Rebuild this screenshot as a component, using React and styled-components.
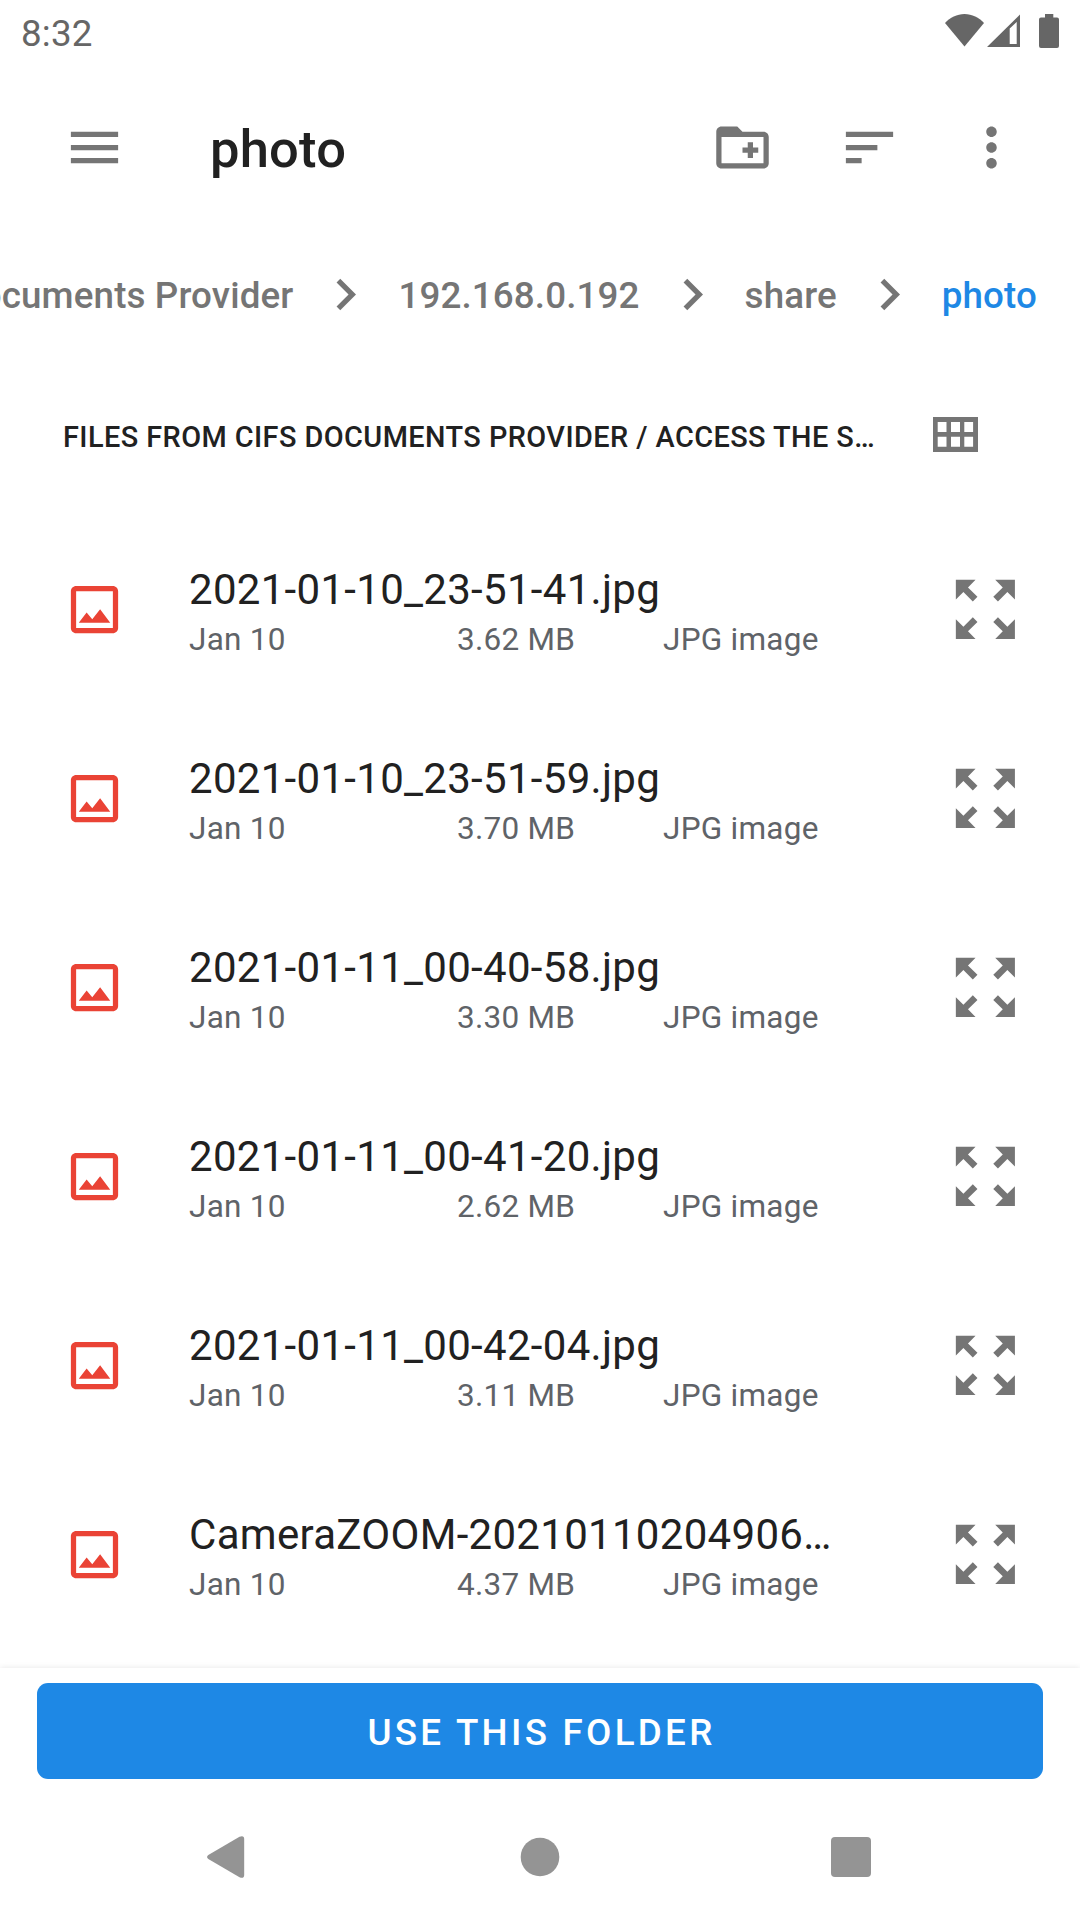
import React from "react";
import styled, { createGlobalStyle } from "styled-components";

const GlobalStyle = createGlobalStyle`
  *, *::before, *::after { box-sizing: border-box; }
  body { margin: 0; background: #fff; }
`;

const Screen = styled.div`
  width: 1080px;
  height: 1920px;
  display: flex;
  flex-direction: column;
  overflow: hidden;
  background: #fff;
  color: #212121;
  font-family: Roboto, "Noto Sans", sans-serif;
`;

const Icon = styled.svg`
  display: block;
  flex: none;
  width: ${(p) => p.$w || 63}px;
  height: ${(p) => p.$h || p.$w || 63}px;
  fill: ${(p) => p.$color || "#757575"};
`;

const StatusBar = styled.header`
  height: 63px;
  display: flex;
  justify-content: space-between;
  padding: 0 21px 0 21px;
`;

const Clock = styled.time`
  font-size: 36.75px;
  line-height: 67px;
  letter-spacing: 0.2px;
  color: #666;
`;

const StatusIcons = styled.div`
  display: flex;
  align-items: flex-start;
  padding-top: 14px;
`;

const BatterySlot = styled.div`
  margin-left: 19px;
`;

const SignalSlot = styled.div`
  margin-left: 3px;
`;

const Toolbar = styled.div`
  height: 147px;
  padding: 52.5px 57px 0 63px;
  display: flex;
  align-items: flex-start;
`;

const Title = styled.h1`
  flex: 1;
  margin: 0 0 0 84px;
  font-size: 52.5px;
  line-height: 66px;
  font-weight: 500;
  letter-spacing: 0.2px;
`;

const Actions = styled.div`
  display: grid;
  grid-template-columns: 127px 122px 63px;
`;

const Breadcrumb = styled.nav`
  height: 168px;
  padding: 53px 43px 0 0;
  display: flex;
  justify-content: flex-end;
  align-items: flex-start;
  gap: 21px;
  overflow: hidden;
`;

const Crumb = styled.span`
  flex: none;
  white-space: nowrap;
  font-size: 36.75px;
  line-height: 66px;
  font-weight: 500;
  letter-spacing: 0.13px;
  color: ${(p) => (p.$active ? "#1e88e5" : "#757575")};
`;

const SectionHeader = styled.div`
  height: 137px;
  padding: 24px 102.5px 0 63px;
  display: flex;
  justify-content: space-between;
  align-items: flex-start;
`;

const SectionTitle = styled.h2`
  margin: 0;
  padding-top: 15px;
  font-size: 28.875px;
  line-height: 40px;
  font-weight: 500;
  letter-spacing: 0.435px;
  white-space: nowrap;
`;

const GridSlot = styled.div`
  padding-top: 15px;
`;

const FileList = styled.ul`
  flex: none;
  height: 1152px;
  margin: 0;
  padding: 0;
  list-style: none;
`;

const Row = styled.li`
  height: 189px;
  padding: 0 55px 0 63px;
  display: flex;
  align-items: center;
`;

const FileInfo = styled.div`
  flex: none;
  width: 643px;
  margin: 0 114px 0 63px;
  padding-top: 10px;
`;

const FileName = styled.div`
  font-size: 42px;
  line-height: 50px;
  letter-spacing: 0.3px;
  white-space: nowrap;
`;

const Meta = styled.div`
  display: grid;
  grid-template-columns: 268px 206px 1fr;
  margin-top: 1px;
  font-size: 31.5px;
  line-height: 48px;
  letter-spacing: 0.25px;
  color: #5f6368;
`;

const Footer = styled.footer`
  flex: none;
  height: 126px;
  margin-top: 1px;
  padding: 15px 37px 0;
  background: #fff;
  box-shadow: 0 0 6px rgba(0, 0, 0, 0.1);
  clip-path: inset(-10px 0 0 0);
`;

const FolderButton = styled.button`
  display: block;
  width: 100%;
  height: 96px;
  padding: 2px 0 0 3px;
  border: 0;
  border-radius: 11px;
  background: #1e88e5;
  color: #fff;
  font: 500 36.75px/96px Roboto, sans-serif;
  letter-spacing: 3.28px;
`;

const NavBar = styled.nav`
  flex: none;
  height: 126px;
  padding: 42px 207px 0;
  display: grid;
  grid-template-columns: 1fr 42px 1fr;
`;

const NavEnd = styled.div`
  justify-self: end;
`;

const files = [
  ["2021-01-10_23-51-41.jpg", "3.62 MB"],
  ["2021-01-10_23-51-59.jpg", "3.70 MB"],
  ["2021-01-11_00-40-58.jpg", "3.30 MB"],
  ["2021-01-11_00-41-20.jpg", "2.62 MB"],
  ["2021-01-11_00-42-04.jpg", "3.11 MB"],
  ["CameraZOOM-20210110204906…", "4.37 MB"],
];

const Glyph = ({ d, ...rest }) => (
  <Icon viewBox="0 0 24 24" {...rest}>
    <path d={d} />
  </Icon>
);

const Chevron = () => <Glyph d="M10 6 8.59 7.41 13.17 12l-4.58 4.59L10 18l6-6z" />;

export default function App() {
  return (
    <Screen>
      <GlobalStyle />
      <StatusBar>
        <Clock>8:32</Clock>
        <StatusIcons>
          <Icon viewBox="0 0 39 33" $w={39} $h={33} $color="#666">
            <path d="M0 9C5 3.5 12 0 19.5 0S34 3.5 39 9L19.5 32.6z" />
          </Icon>
          <SignalSlot>
            <Icon viewBox="0 0 33 33" $w={33} $h={33} $color="#666">
              <path fillRule="evenodd" d="M0 33 33 .5V33zM22.7 14.5V30h7V8z" />
            </Icon>
          </SignalSlot>
          <BatterySlot>
            <Icon viewBox="0 0 20 34" $w={20} $h={34} $color="#666">
              <path d="M6 0h8.3v3.5H18a2 2 0 0 1 2 2V32a2 2 0 0 1-2 2H2a2 2 0 0 1-2-2V5.500a2 2 0 0 1 2-2h4z" />
            </Icon>
          </BatterySlot>
        </StatusIcons>
      </StatusBar>

      <Toolbar>
        <Glyph d="M3 18h18v-2H3v2zm0-5h18v-2H3v2zm0-7v2h18V6H3z" />
        <Title>photo</Title>
        <Actions>
          <Glyph d="M20 6h-8l-2-2H4c-1.110 0-1.990.89-1.990 2L2 18c0 1.110.89 2 2 2h16c1.110 0 2-.89 2-2V8c0-1.110-.89-2-2-2zm0 12H4V8h16v10zm-8-4h2v2h2v-2h2v-2h-2v-2h-2v2h-2z" />
          <Glyph d="M3 18h6v-2H3v2zM3 6v2h18V6H3zm0 7h12v-2H3v2z" />
          <Glyph d="M12 8c1.100 0 2-.9 2-2s-.9-2-2-2-2 .9-2 2 .9 2 2 2zm0 2c-1.100 0-2 .9-2 2s.9 2 2 2 2-.9 2-2-.9-2-2-2zm0 6c-1.100 0-2 .9-2 2s.9 2 2 2 2-.9 2-2-.9-2-2-2z" />
        </Actions>
      </Toolbar>

      <Breadcrumb>
        <Crumb>CIFS Documents Provider</Crumb>
        <Chevron />
        <Crumb>192.168.0.192</Crumb>
        <Chevron />
        <Crumb>share</Crumb>
        <Chevron />
        <Crumb $active>photo</Crumb>
      </Breadcrumb>

      <SectionHeader>
        <SectionTitle>FILES FROM CIFS DOCUMENTS PROVIDER / ACCESS THE S…</SectionTitle>
        <GridSlot>
          <Icon viewBox="0 0 45 35" $w={45} $h={35}>
            <path
              fillRule="evenodd"
              d="M0 0h45v35H0zM4.700 5h8.800v10H4.700zM18 5h9v10h-9zM31.300 5h8.800v10h-8.800zM4.700 19.700h8.800v10H4.700zM18 19.700h9v10h-9zM31.300 19.700h8.800v10h-8.800z"
            />
          </Icon>
        </GridSlot>
      </SectionHeader>

      <FileList>
        {files.map(([name, size]) => (
          <Row key={name}>
            <Glyph
              $color="#ea4335"
              d="M19 5v14H5V5h14m0-2H5c-1.100 0-2 .9-2 2v14c0 1.100.9 2 2 2h14c1.100 0 2-.9 2-2V5c0-1.100-.9-2-2-2zm-4.860 8.860-3 3.870L9 13.140 6 17h12l-3.860-5.140z"
            />
            <FileInfo>
              <FileName>{name}</FileName>
              <Meta>
                <span>Jan 10</span>
                <span>{size}</span>
                <span>JPG image</span>
              </Meta>
            </FileInfo>
            <Glyph
              $w={78.75}
              d="M15 3l2.300 2.300-2.890 2.870 1.420 1.420L18.700 6.700 21 9V3zM3 9l2.300-2.300 2.870 2.890 1.420-1.420L6.700 5.300 9 3H3zM9 21l-2.300-2.300 2.890-2.870-1.420-1.420L5.300 17.300 3 15v6zM21 15l-2.300 2.300-2.870-2.890-1.420 1.420 2.890 2.870L15 21h6z"
            />
          </Row>
        ))}
      </FileList>

      <Footer>
        <FolderButton>USE THIS FOLDER</FolderButton>
      </Footer>

      <NavBar>
        <Icon viewBox="0 0 38 42" $w={38} $h={42} $color="#949494">
          <path d="M1.300 19 32.500.7Q37.200-1 37.200 3v36q0 4-4.700 2.300L1.300 23q-2.500-2 0-4z" />
        </Icon>
        <Icon viewBox="0 0 42 42" $w={42} $h={42} $color="#949494">
          <circle cx="21" cy="21" r="19.300" />
        </Icon>
        <NavEnd>
          <Icon viewBox="0 0 42 42" $w={42} $h={42} $color="#949494">
            <rect x="0" y="1" width="40" height="40" rx="4" />
          </Icon>
        </NavEnd>
      </NavBar>
    </Screen>
  );
}
